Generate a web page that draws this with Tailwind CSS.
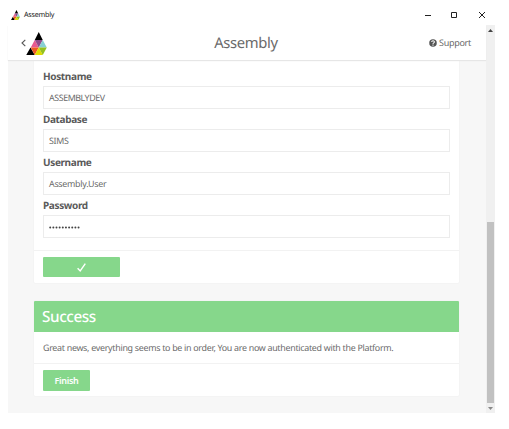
<!DOCTYPE html>
<html lang="en">
<head>
    <meta charset="UTF-8">
    <meta name="viewport" content="width=device-width, initial-scale=1.0">
    <title>Assembly</title>
    <script src="https://cdn.jsdelivr.net/npm/@tailwindcss/browser@4"></script>
</head>
<body class="bg-white font-['Noto_Sans',sans-serif] text-[#6a6a6a] overflow-hidden [text-rendering:geometricPrecision]">

    <!-- Window -->
    <div class="ml-2 w-[487px] h-[413px] flex flex-col">

        <!-- Title bar -->
        <div class="h-[25px] shrink-0 flex items-center pt-[5px] pl-[3px]">
            <svg class="w-[9px] h-[10px] shrink-0" viewBox="0 0 20.5 23">
                <path fill="#000" d="M12.5 0l4 8h-8zM4.25 15.5L8.5 23H0z"/>
                <path fill="#e75a91" d="M8.5 8l4 7.5h-8z"/>
                <path fill="#8f4a8b" d="M8.5 8h8l-4 7.5z"/>
                <path fill="#87cfd3" d="M16.5 8l4 7.5h-8z"/>
                <path fill="#ef5a24" d="M4.5 15.5h8l-4 7.5z"/>
                <path fill="#dedc00" d="M12.5 15.5l4 7.5h-8z"/>
                <path fill="#95c11f" d="M12.5 15.5h8l-4 7.5z"/>
            </svg>
            <span class="ml-1 pt-[2px] text-[7.2px] leading-none tracking-[-0.25px] text-[#222] w-[393px] shrink-0">Assembly</span>
            <svg class="w-[80px] h-[10px] shrink-0" viewBox="0 0 80 10" fill="none" stroke="#222" stroke-width="1">
                <path d="M8 5.5h6"/>
                <path d="M34.5 2.5h5v5h-5z"/>
                <path d="M62 2l6 6M68 2l-6 6"/>
            </svg>
        </div>

        <div class="flex flex-1 min-h-0">

            <div class="w-[478px] flex flex-col bg-[#f7f7f7]">
                <!-- Header -->
                <header class="h-[35px] shrink-0 grid grid-cols-3 items-center bg-white shadow-[0_1px_1px_#e6e6e6] relative">
                    <div class="flex items-center pl-[13px] pt-[2px]">
                        <svg class="w-[5px] h-[8px] -mt-[2px]" viewBox="0 0 5 8" fill="none" stroke="#555" stroke-width="1.1">
                            <path d="M4.3 .8L1 4l3.3 3.2"/>
                        </svg>
                        <svg class="w-[21px] h-[23px]" viewBox="0 0 20.5 23">
                            <path fill="#000" d="M12.5 0l4 8h-8zM4.25 15.5L8.5 23H0z"/>
                            <path fill="#e75a91" d="M8.5 8l4 7.5h-8z"/>
                            <path fill="#8f4a8b" d="M8.5 8h8l-4 7.5z"/>
                            <path fill="#87cfd3" d="M16.5 8l4 7.5h-8z"/>
                            <path fill="#ef5a24" d="M4.5 15.5h8l-4 7.5z"/>
                            <path fill="#dedc00" d="M12.5 15.5l4 7.5h-8z"/>
                            <path fill="#95c11f" d="M12.5 15.5h8l-4 7.5z"/>
                        </svg>
                    </div>
                    <h1 class="text-center text-[14.8px] leading-none tracking-[-0.35px] pt-px pr-[2px]">Assembly</h1>
                    <div class="flex items-center justify-end pr-[15px] text-[9px] leading-none tracking-[-0.3px]">
                        <svg class="w-[8px] h-[8px] mr-[2px]" viewBox="0 0 14 14">
                            <circle cx="7" cy="7" r="6.6" fill="#555"/>
                            <path d="M4.6 5.2C4.8 2.4 9.4 2.4 9.4 5.1 9.4 6.8 7 6.8 7 8.6M7 9.8v2" fill="none" stroke="#fff" stroke-width="1.8"/>
                        </svg>
                        Support
                    </div>
                </header>

                <!-- Connection form -->
                <section class="ml-[26px] w-[425px] h-[223px] shrink-0 bg-white rounded-b-[1px] shadow-[0_0_1px_#ddd]">
                    <div class="px-[9px] pt-[9px] h-[190px] text-[8.9px] tracking-[-0.28px]">
                        <label class="block h-[17px] text-[10px] leading-[14px] tracking-[-0.35px] font-bold text-[#5a5a5a]">Hostname</label>
                        <div class="h-[23px] mb-[3px] px-[5px] leading-[21px] tracking-[-0.43px] border border-[#ececec]">ASSEMBLYDEV</div>
                        <label class="block h-[17px] text-[10px] leading-[14px] tracking-[-0.35px] font-bold text-[#5a5a5a]">Database</label>
                        <div class="h-[23px] mb-[3px] px-[5px] leading-[21px] border border-[#ececec]">SIMS</div>
                        <label class="block h-[17px] text-[10px] leading-[14px] tracking-[-0.35px] font-bold text-[#5a5a5a]">Username</label>
                        <div class="h-[23px] mb-[3px] px-[5px] leading-[21px] border border-[#ececec]">Assembly.User</div>
                        <label class="block h-[17px] text-[10px] leading-[14px] tracking-[-0.35px] font-bold text-[#5a5a5a]">Password</label>
                        <div class="h-[23px] flex items-center px-[5px] pt-px border border-[#ececec]">
                            <svg class="w-[31px] h-[3px]" viewBox="0 0 31 3">
                                <path d="M1.2 1.5h29" fill="none" stroke="#444" stroke-width="2" stroke-linecap="round" stroke-dasharray="0 3.15"/>
                            </svg>
                        </div>
                    </div>
                    <div class="h-[33px] border-t border-[#f2f2f2] px-[9px] pt-[6px]">
                        <div class="w-[76.5px] h-[20px] rounded-[1px] bg-[#86d78b] flex items-center justify-center">
                            <svg class="w-[9px] h-[9px]" viewBox="0 0 9 9" fill="none" stroke="#fff" stroke-width="1.4">
                                <path d="M.6 5.2L3.2 7.9 8.3 .7"/>
                            </svg>
                        </div>
                    </div>
                </section>

                <!-- Result -->
                <section class="ml-[26px] mt-[18px] w-[425px] h-[95px] shrink-0 bg-white rounded-[1px] shadow-[0_0_1px_#ddd]">
                    <h2 class="h-[31px] px-[8px] rounded-t-[1px] bg-[#86d78b] text-white text-[15.3px] leading-[32px] tracking-[-0.4px] font-medium">Success</h2>
                    <p class="h-[31px] px-[9px] text-[8.9px] leading-[31px] tracking-[-0.29px] whitespace-nowrap">Great news, everything seems to be in order, You are now authenticated with the Platform.</p>
                    <div class="border-t border-[#f2f2f2] px-[9px] pt-[6px]">
                        <button class="block w-[47px] h-[21px] rounded-[1px] bg-[#86d78b] text-white text-[9px] leading-[20px] tracking-[-0.3px] font-semibold">Finish</button>
                    </div>
                </section>
            </div>

            <!-- Scrollbar -->
            <div class="w-[9px] bg-[#f0f0f0] flex flex-col items-center">
                <svg class="w-[5px] h-[3px] mt-[4px]" viewBox="0 0 5 3"><path d="M0 3L2.5 0 5 3z" fill="#444"/></svg>
                <div class="mt-[190px] w-[7px] h-[181px] bg-[#c1c1c1]"></div>
                <svg class="w-[5px] h-[3px] mt-[4px]" viewBox="0 0 5 3"><path d="M0 0h5L2.5 3z" fill="#888"/></svg>
            </div>
        </div>
    </div>

</body>
</html>
